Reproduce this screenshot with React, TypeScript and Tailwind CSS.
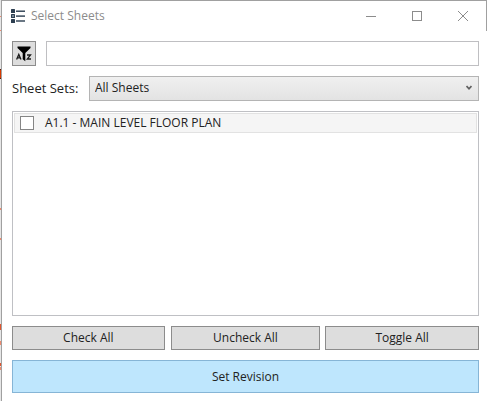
import { useState } from "react";

const sheets = [{ id: "a11", name: "A1.1 - MAIN LEVEL FLOOR PLAN" }];

const captionButton = "flex w-[46px] items-center justify-center";
const grayButton = "h-6 border border-[#8c8c8c] bg-[#dddddd] text-xs text-[#222222]";

function ListIcon() {
  return (
    <svg width="14" height="14" viewBox="0 0 14 14" aria-hidden="true">
      <g fill="#2c3e50">
        <rect x="0" y="0" width="4" height="4" rx="0.5" />
        <rect x="0" y="5" width="4" height="4" rx="0.5" />
        <rect x="0" y="10" width="4" height="4" rx="0.5" />
        <rect x="5" y="1.5" width="9" height="1.4" />
        <rect x="5" y="6.4" width="9" height="1.4" />
        <rect x="5" y="11.3" width="9" height="1.4" />
      </g>
      <rect x="1.3" y="6.3" width="1.4" height="1.4" fill="#c5d0da" />
    </svg>
  );
}

function FilterIcon() {
  return (
    <svg width="16" height="16" viewBox="0 0 16 16" className="shrink-0" aria-hidden="true">
      <path d="M1.5 0.5H14.5V2L9.3 7V15.2L6.7 13.2V7L1.5 2Z" fill="#000" />
      <g fill="none" stroke="#1a1a1a" strokeWidth="1.3">
        <path d="M0.6 13.6L2.8 8.4L5 13.6M1.5 11.8H4.2" />
        <path d="M11 9H14.5L11.3 13H15" />
      </g>
    </svg>
  );
}

/* Sliver of the drawing that shows beside the window */
function Backdrop() {
  return (
    <svg className="w-px shrink-0 self-start" height="401" viewBox="0 0 1 401" aria-hidden="true">
      <rect width="1" height="401" fill="#e6e6e6" />
      <g fill="#ee8a6e">
        <rect y="16" width="1" height="1" />
        <rect y="30" width="1" height="1" />
        <rect y="69" width="1" height="10" fill="#5a1c08" />
        <rect y="70" width="1" height="8" fill="#d63a00" />
        <rect y="208" width="1" height="2" />
        <rect y="238" width="1" height="2" />
        <rect y="324" width="1" height="6" fill="#e0562f" />
        <rect y="341" width="1" height="4" />
        <rect y="363" width="1" height="3" fill="#e0562f" />
        <rect y="367" width="1" height="3" />
      </g>
    </svg>
  );
}

export default function App() {
  const [checked, setChecked] = useState<string[]>([]);
  const [query, setQuery] = useState("");

  const toggle = (id: string) =>
    setChecked((c) => (c.includes(id) ? c.filter((x) => x !== id) : [...c, id]));

  return (
    <div className="flex min-h-screen bg-white font-['Open_Sans','Noto_Sans',sans-serif] text-[#222222]">
      <Backdrop />
      <div className="flex flex-1 flex-col border-l border-t border-[#a0a0a0]">
        <header className="flex h-[30px] items-stretch border-r border-[#a0a0a0] pl-[9px]">
          <div className="flex flex-1 items-center gap-1.5">
            <ListIcon />
            <h1 className="text-xs text-[#8c8c8c]">Select Sheets</h1>
          </div>
          <button className={captionButton} aria-label="Minimize">
            <svg width="10" height="10" viewBox="0 0 10 10">
              <path d="M0 5.5H10" stroke="#8c8c8c" />
            </svg>
          </button>
          <button className={captionButton} aria-label="Maximize">
            <svg width="10" height="10" viewBox="0 0 10 10">
              <rect x="0.5" y="0.5" width="9" height="9" fill="none" stroke="#8c8c8c" />
            </svg>
          </button>
          <button className={captionButton} aria-label="Close">
            <svg width="10" height="10" viewBox="0 0 10 10">
              <path d="M0 0L10 10M10 0L0 10" stroke="#8c8c8c" />
            </svg>
          </button>
        </header>

        <main className="flex flex-1 flex-col gap-2.5 pb-2 pl-2.5 pr-2 pt-2.5">
          <div className="flex gap-2.5">
            <button
              className="flex h-[25px] w-6 items-center justify-center border border-[#8c8c8c] bg-[#dddddd]"
              aria-label="Filter sheets"
            >
              <FilterIcon />
            </button>
            <input
              type="text"
              aria-label="Filter text"
              value={query}
              onChange={(e) => setQuery(e.target.value)}
              className="h-[25px] min-w-0 flex-1 border border-[#bfbfc2] bg-white px-1 text-xs"
            />
          </div>

          <div className="flex items-center gap-2.5">
            <label htmlFor="sets" className="w-[67px] whitespace-nowrap text-[13px]">
              Sheet Sets:
            </label>
            <div className="relative flex-1">
              <select
                id="sets"
                className="block h-[25px] w-full appearance-none border border-[#b4b4b4] bg-linear-to-b from-[#f0f0f0] to-[#e3e3e3] pb-0.5 pl-[5px] text-xs"
              >
                <option>All Sheets</option>
              </select>
              <svg
                className="pointer-events-none absolute right-[7px] top-[9px]"
                width="6"
                height="6"
                viewBox="0 0 6 6"
                aria-hidden="true"
              >
                <path d="M0.5 1L3 3.8L5.5 1" fill="none" stroke="#606060" strokeWidth="1.7" />
              </svg>
            </div>
          </div>

          <ul className="flex-1 border border-[#bfc0c4] p-px">
            {sheets.map((s) => (
              <li key={s.id}>
                <label className="flex h-5 items-center gap-[11px] border border-[#e2e2e2] bg-[#f5f5f5] pl-[5px] text-xs">
                  <input
                    type="checkbox"
                    checked={checked.includes(s.id)}
                    onChange={() => toggle(s.id)}
                    className="size-3.5 appearance-none border border-[#858585] bg-white checked:bg-[#606060]"
                  />
                  {s.name}
                </label>
              </li>
            ))}
          </ul>

          <div className="grid grid-cols-3">
            <button
              className={`${grayButton} mr-[3px]`}
              onClick={() => setChecked(sheets.map((s) => s.id))}
            >
              Check All
            </button>
            <button className={`${grayButton} mx-[3px]`} onClick={() => setChecked([])}>
              Uncheck All
            </button>
            <button
              className={`${grayButton} ml-[2px]`}
              onClick={() => sheets.forEach((s) => toggle(s.id))}
            >
              Toggle All
            </button>
          </div>

          <button className="h-[33px] border border-[#86b5d6] bg-[#bee6fd] text-xs">
            Set Revision
          </button>
        </main>
      </div>
    </div>
  );
}
